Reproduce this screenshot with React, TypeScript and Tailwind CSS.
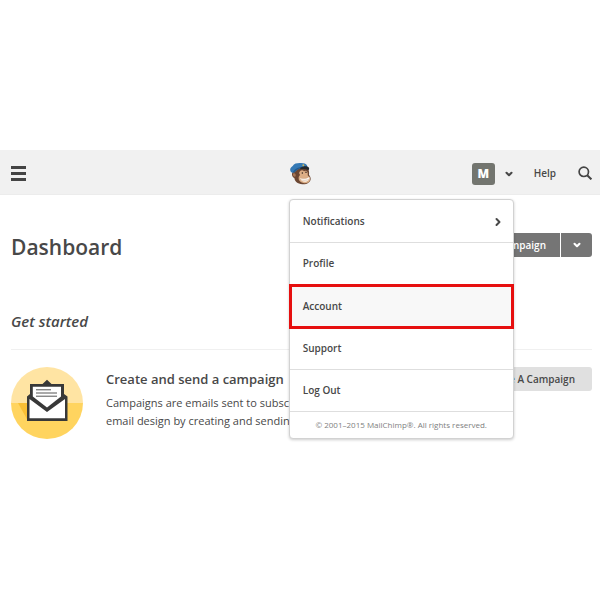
import { useState } from 'react';
import { ChevronDown, ChevronRight } from 'lucide-react';

const menuItems = ['Notifications', 'Profile', 'Account', 'Support', 'Log Out'];

function ChimpLogo() {
  return (
    <svg viewBox="6 6 72 72" className="w-6 h-6" aria-label="MailChimp" role="img">
      {/* head and ear */}
      <path d="M22 36C16 42 17 54 25 57c1 9 9 18 24 19 14 1 24-6 25-16 0-6-2-9-5-12 1-8 0-15-4-21L40 24z" fill="#6b4632" />
      <path d="M21 44c5-3 9 1 8 8-4 3-9-1-8-8z" fill="#a97756" />
      {/* face */}
      <path d="M40 40c3-7 10-8 14-3 5-4 10-2 11 4 1 4-1 6 1 9 5 4 7 8 6 13-2 8-11 11-20 9-10-2-15-9-14-16 0-4 3-6 4-9-2-2-3-4-2-7z" fill="#dcae86" />
      <path d="M42 56c8 4 19 4 28-3 2 8-4 15-13 15-8 0-14-5-15-12z" fill="#fbf5ee" />
      <path d="M40 55c9 5 21 5 30-3M43 62c8 3 18 3 26-1" fill="none" stroke="#c79c7a" strokeWidth="1.200" />
      <circle cx="49" cy="42" r="2.200" fill="#2d211c" />
      <circle cx="60" cy="40" r="2.200" fill="#2d211c" />
      {/* cap */}
      <path d="M13 35c-2-6 2-10 7-14 4-7 12-9 21-9 10-1 19 1 22 7l1 7c-16-2-29 3-38 14-5 3-11 1-13-5z" fill="#3579b5" />
      <path d="M21 38c8-11 21-16 42-14v2c-16-2-29 3-38 14-1 0-3-1-4-2z" fill="#255b8c" />
      <path d="M43 27c8-6 20-7 26-1 1 3 0 6-2 7-8-4-16-4-24-2z" fill="#24282d" />
      <circle cx="52" cy="19" r="3" fill="#c9b65b" />
    </svg>
  );
}

function EnvelopeIcon() {
  return (
    <svg viewBox="0 0 72 72" className="w-[72px] h-[72px] shrink-0" aria-hidden="true">
      <path d="M0 36a36 36 0 0 1 72 0z" fill="#ffe4a3" />
      <path d="M0 36a36 36 0 0 0 72 0z" fill="#ffd45f" />
      <path d="M7 36h10v18z" fill="#f9bf35" />
      <path d="M16 29.500l3-2.500V17h12.500L36 12.700 40.500 17H53v10l3.500 2.500V54H16z" fill="#383838" />
      <path d="M18.500 32L36 45l18-13V51.300H18.500z" fill="#fff" />
      <path d="M21.800 19.700h28.200v9.800L36 40.500 21.800 29.500z" fill="#fff" />
      <path d="M25 22.800h15M25 26h21M25 29.200h21" stroke="#555" strokeWidth="1" />
    </svg>
  );
}

function AccountMenu() {
  return (
    <div className="absolute z-10 top-full right-0 mt-[5px] w-[225px] bg-white rounded border border-[#d2d2d2] shadow-[0_1px_3px_rgba(0,0,0,0.2)]">
      <nav className="pt-px">
        {menuItems.map((item) => (
          <a
            key={item}
            href="#"
            className={
              item === 'Account'
                ? 'relative flex items-center h-[45px] -my-px -mx-px px-[11px] bg-[#f8f8f8] border-3 border-[#e60f0f]'
                : 'flex items-center justify-between h-[42px] px-[13px] border-b border-[#dedede]'
            }
          >
            {item}
            {item === 'Notifications' && <ChevronRight size={12} strokeWidth={4} className="-mr-1" />}
          </a>
        ))}
      </nav>
      <p className="text-center text-[8px] leading-[26px] font-normal text-[#808080]">
        © 2001–2015 MailChimp®. All rights reserved.
      </p>
    </div>
  );
}

function Header() {
  const [open, setOpen] = useState(true);

  return (
    <header className="grid grid-cols-[1fr_auto_1fr] items-center h-[45px] px-2 bg-[#f1f1f1] border-b border-[#ececec] text-[10px] font-semibold">
      <button aria-label="Open navigation" className="ml-[3px] mt-[2px] w-[15px] flex flex-col gap-[3px]">
        <span className="h-[3px] w-full bg-[#444]" />
        <span className="h-[3px] w-full bg-[#444]" />
        <span className="h-[3px] w-full bg-[#444]" />
      </button>
      <a href="#" className="pt-[2px]">
        <ChimpLogo />
      </a>
      <div className="flex items-center justify-end h-full">
        <div className="relative flex items-center h-full mr-5">
          <button
            aria-label="Account menu"
            aria-expanded={open}
            onClick={() => setOpen(!open)}
            className="flex items-center gap-[9px] pt-[3px]"
          >
            <span className="flex items-center justify-center w-[23px] h-[22px] rounded-[3px] bg-[#73756f] text-white text-[12px] font-extrabold">
              M
            </span>
            <ChevronDown size={10} strokeWidth={5} />
          </button>
          {open && <AccountMenu />}
        </div>
        <a href="#" className="mr-[22px] pt-[2px]">Help</a>
        <button aria-label="Search" className="pt-[2px]">
          <svg viewBox="0 0 14 14" className="w-[14px] h-[14px]" fill="none" stroke="#444" strokeWidth="1.700">
            <circle cx="5.800" cy="5.800" r="4.700" />
            <path d="M9.200 9.200l4.200 4.200" strokeWidth="2" />
          </svg>
        </button>
      </div>
    </header>
  );
}

export default function App() {
  return (
    <div className="min-h-screen pt-[150px] bg-white text-[#484848] font-['Open_Sans','Noto_Sans',sans-serif]">
      <Header />
      <main className="pl-[11px] pr-2">
        <div className="flex items-center justify-between pt-9">
          <h1 className="text-[21px] leading-8 font-semibold">Dashboard</h1>
          <div className="flex gap-px h-6 -mt-1 text-[10px] font-semibold text-white">
            <button className="px-[14px] rounded-l-[3px] bg-[#757575]">Create Campaign</button>
            <button aria-label="More campaign options" className="w-[31px] flex items-center justify-center rounded-r-[3px] bg-[#757575]">
              <ChevronDown size={10} strokeWidth={5} />
            </button>
          </div>
        </div>

        <section>
          <h2 className="mt-[46px] pb-4 text-[15px] leading-6 font-semibold italic border-b border-[#f0f0f0]">Get started</h2>
          <div className="flex items-start pt-[17px]">
            <EnvelopeIcon />
            <div className="ml-[23px] flex-1">
              <h3 className="text-[13px] leading-6 font-semibold">Create and send a campaign</h3>
              <p className="mt-[3px] text-[11px] leading-[18px]">
                Campaigns are emails sent to subscribers
                <br />
                email design by creating and sending
              </p>
            </div>
            <button className="h-6 px-[17px] rounded-[3px] bg-[#e0e0e0] text-[10px] font-semibold">Create A Campaign</button>
          </div>
        </section>
      </main>
    </div>
  );
}
